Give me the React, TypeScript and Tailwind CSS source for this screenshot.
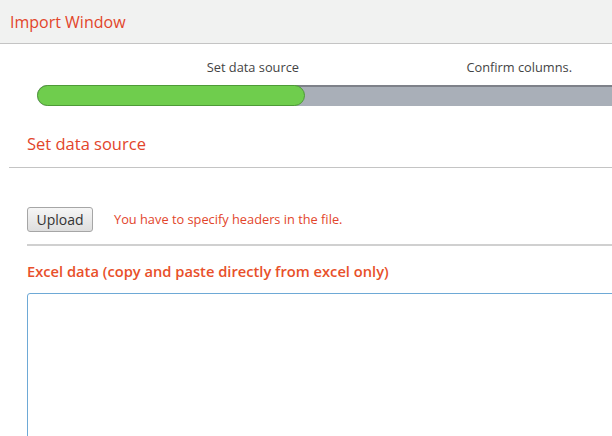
import React from "react";

const App = () => {
  return (
    <div className="h-[436px] w-[612px] overflow-hidden bg-white font-['Open_Sans',sans-serif]">
      <div className="flex h-[44px] items-center border-b border-[#c4c4c4] bg-[#f1f2f1] pl-[10px]">
        <h1 className="text-[16px] text-[#e2452b]">Import Window</h1>
      </div>

      {/* steps */}
      <div className="pl-[37px]">
        <div className="flex h-[41px] items-end pb-[8px] text-[12.8px] text-[#444]">
          <div className="w-[268px] shrink-0 pr-[6px] text-right">Set data source</div>
          <div className="w-[268px] shrink-0 pr-[1px] text-right">Confirm columns.</div>
        </div>
        <div className="h-[21px] rounded-l-full border-t-2 border-[#7e8189] bg-[#a9afb8]">
          <div className="-mt-[2px] h-[21px] w-[268px] rounded-full border border-[#4e9a37] bg-[#6fcd4d]" />
        </div>
      </div>

      <div className="ml-[9px] flex h-[62px] items-end border-b border-[#c4c4c4] pb-[10px] pl-[18px]">
        <h2 className="text-[16.5px] text-[#e2452b]">Set data source</h2>
      </div>

      <div className="pl-[27px]">
        <div className="flex items-center gap-[21px] pt-[39px] pb-[12px]">
          <button className="h-[25px] w-[66px] rounded-[3px] border border-[#a6a6a6] bg-gradient-to-b from-[#f6f6f6] to-[#dedede] text-[14px] text-[#333]">
            Upload
          </button>
          <span className="text-[12.8px] text-[#e2452b]">You have to specify headers in the file.</span>
        </div>
        <div className="h-[2px] bg-[#d0d0d0]" />
        <h3 className="pt-[14px] pb-[11px] text-[14.7px] font-semibold text-[#e8502a]">
          Excel data (copy and paste directly from excel only)
        </h3>
        <textarea className="block h-[200px] w-[600px] rounded-tl-[3px] border border-[#6ea9d6] outline-none" />
      </div>
    </div>
  );
};

export default App;
